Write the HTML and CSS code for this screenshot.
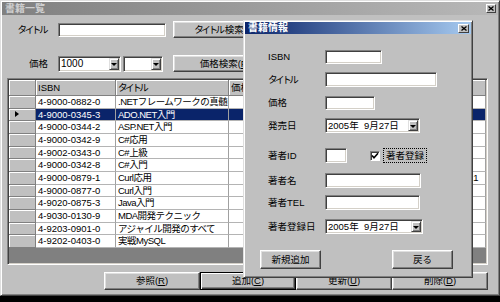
FILE: index.html
```html
<!DOCTYPE html>
<html lang="ja">
<head>
    <meta charset="UTF-8">
    <title>書籍一覧</title>
    <link rel="stylesheet" href="styles.css">
</head>
<body>
    <!-- main list window (inactive) -->
    <div class="window main-window">
        <div class="titlebar inactive">
            <span class="title">書籍一覧</span>
            <span class="close-btn"><svg width="6" height="5" viewBox="0 0 6 5"><path d="M0.5 0.5 L5.5 4.5 M5.5 0.5 L0.5 4.5" stroke="#000" stroke-width="1.3"/></svg></span>
        </div>

        <div class="search-row first">
            <span class="search-label"><span class="kana">タイトル</span></span>
            <span class="field title-input"></span>
            <span class="btn search-btn"><span class="kana">タイトル</span>検索(<u>T</u>)</span>
        </div>
        <div class="search-row">
            <span class="search-label">価格</span>
            <span class="field combo price-from"><span class="combo-text">1000</span><span class="drop-btn"></span></span>
            <span class="field combo price-to"><span class="combo-text"></span><span class="drop-btn"></span></span>
            <span class="btn search-btn">価格検索(<u>P</u>)</span>
        </div>

        <div class="grid">
            <div class="grid-row head">
                <div class="rh"></div>
                <div class="hc">ISBN</div>
                <div class="hc"><span class="kana">タイトル</span></div>
                <div class="hc">価格</div>
                <div class="hc">著者名</div>
                <div class="hc">発売日</div>
            </div>
            <div class="grid-row"><div class="rh"></div><div class="c">4-9000-0882-0</div><div class="c t">.NETフレームワークの真髄</div><div class="c"></div><div class="c"></div><div class="c"></div></div>
            <div class="grid-row selected"><div class="rh"><span class="pointer"></span></div><div class="c">4-9000-0345-3</div><div class="c t">ADO.NET入門</div><div class="c"></div><div class="c"></div><div class="c"></div></div>
            <div class="grid-row"><div class="rh"></div><div class="c">4-9000-0344-2</div><div class="c t">ASP.NET入門</div><div class="c"></div><div class="c"></div><div class="c"></div></div>
            <div class="grid-row"><div class="rh"></div><div class="c">4-9000-0342-9</div><div class="c t">C#応用</div><div class="c"></div><div class="c"></div><div class="c"></div></div>
            <div class="grid-row"><div class="rh"></div><div class="c">4-9002-0343-0</div><div class="c t">C#上級</div><div class="c"></div><div class="c"></div><div class="c"></div></div>
            <div class="grid-row"><div class="rh"></div><div class="c">4-9000-0342-8</div><div class="c t">C#入門</div><div class="c"></div><div class="c"></div><div class="c"></div></div>
            <div class="grid-row"><div class="rh"></div><div class="c">4-9000-0879-1</div><div class="c t">Curl応用</div><div class="c"></div><div class="c"></div><div class="c">2005/09/21</div></div>
            <div class="grid-row"><div class="rh"></div><div class="c">4-9000-0877-0</div><div class="c t">Curl入門</div><div class="c"></div><div class="c"></div><div class="c"></div></div>
            <div class="grid-row"><div class="rh"></div><div class="c">4-9020-0875-3</div><div class="c t">Java入門</div><div class="c"></div><div class="c"></div><div class="c"></div></div>
            <div class="grid-row"><div class="rh"></div><div class="c">4-9030-0130-9</div><div class="c t">MDA開発テクニック</div><div class="c"></div><div class="c"></div><div class="c"></div></div>
            <div class="grid-row"><div class="rh"></div><div class="c">4-9203-0901-0</div><div class="c t">アジャイル開発のすべて</div><div class="c"></div><div class="c"></div><div class="c"></div></div>
            <div class="grid-row"><div class="rh"></div><div class="c">4-9202-0403-0</div><div class="c t">実戦MySQL</div><div class="c"></div><div class="c"></div><div class="c"></div></div>
            <div class="grid-empty"></div>
        </div>

        <div class="actions">
            <span class="btn action-btn">参照(<u>R</u>)</span>
            <span class="btn action-btn default">追加(<u>C</u>)</span>
            <span class="btn action-btn">更新(<u>U</u>)</span>
            <span class="btn action-btn">削除(<u>D</u>)</span>
        </div>
    </div>

    <!-- detail dialog (active) -->
    <div class="window dialog">
        <div class="titlebar active">
            <span class="title">書籍情報</span>
            <span class="close-btn"><svg width="6" height="5" viewBox="0 0 6 5"><path d="M0.5 0.5 L5.5 4.5 M5.5 0.5 L0.5 4.5" stroke="#000" stroke-width="1.3"/></svg></span>
        </div>

        <div class="form">
            <div class="form-row">
                <span class="form-label">ISBN</span>
                <span class="field isbn-input"></span>
            </div>
            <div class="form-row">
                <span class="form-label"><span class="kana">タイトル</span></span>
                <span class="field dlg-title-input"></span>
            </div>
            <div class="form-row">
                <span class="form-label">価格</span>
                <span class="field price-input"></span>
            </div>
            <div class="form-row">
                <span class="form-label">発売日</span>
                <span class="field date-picker release-date"><span class="date-text">2005年  9月27日</span><span class="drop-btn"></span></span>
            </div>
            <div class="form-row gap-lg">
                <span class="form-label">著者ID</span>
                <span class="field author-id-input"></span>
                <span class="checkbox"><svg width="8" height="8" viewBox="0 0 8 8"><path d="M1 3.5 L3 5.8 L7 1.2" fill="none" stroke="#000" stroke-width="1.6"/></svg></span>
                <span class="check-label">著者登録</span>
            </div>
            <div class="form-row gap-md">
                <span class="form-label">著者名</span>
                <span class="field author-input"></span>
            </div>
            <div class="form-row gap-sm">
                <span class="form-label">著者TEL</span>
                <span class="field tel-input"></span>
            </div>
            <div class="form-row gap-9">
                <span class="form-label">著者登録日</span>
                <span class="field date-picker register-date"><span class="date-text">2005年  9月27日</span><span class="drop-btn"></span></span>
            </div>
        </div>

        <div class="dialog-buttons">
            <span class="btn dlg-btn">新規追加</span>
            <span class="btn dlg-btn">戻る</span>
        </div>
    </div>
</body>
</html>
```

FILE: styles.css
```css
* {
    box-sizing: border-box;
}

html, body {
    margin: 0;
    height: 100%;
    background-color: #000;
    overflow: hidden;
}

body {
    position: relative;
    font-family: "Liberation Sans", "Noto Sans CJK JP", sans-serif;
    font-size: 9.5px;
    line-height: 1;
    color: #000;
}

u {
    text-decoration: underline;
}

/* katakana is narrow in the original UI font */
.kana {
    letter-spacing: -2.4px;
    margin-right: 2px;
}

/* classic 3D window frame */
.window {
    background-color: #c0c0c0;
    border: 1px solid;
    border-color: #dfdfdf #404040 #404040 #dfdfdf;
    box-shadow: inset 1px 1px 0 #fff, inset -1px -1px 0 #808080;
    padding: 1px;
}

.main-window {
    width: 500px;
    height: 296px;
    display: flex;
    flex-direction: column;
}

.titlebar {
    height: 13px;
    display: flex;
    align-items: center;
    justify-content: space-between;
    padding: 0 2px 0 3px;
    font-weight: bold;
    font-size: 10px;
}

.titlebar.inactive {
    background: linear-gradient(to right, #808080, #b8b8b8);
    color: #cfcfcf;
}

.titlebar.active {
    height: 12px;
    background: linear-gradient(to right, #0a246a, #a6caf0);
    color: #fff;
}

.close-btn {
    width: 10px;
    height: 9px;
    background-color: #c0c0c0;
    border: 1px solid;
    border-color: #fff #404040 #404040 #fff;
    display: flex;
    align-items: center;
    justify-content: center;
}

.dialog .close-btn {
    width: 11px;
}

/* sunken edit box */
.field {
    display: inline-flex;
    align-items: center;
    background-color: #fff;
    border: 1px solid;
    border-color: #808080 #fff #fff #808080;
    box-shadow: inset 1px 1px 0 #404040, inset -1px -1px 0 #d4d0c8;
    padding: 1px;
}

/* raised push button */
.btn {
    display: inline-flex;
    align-items: center;
    justify-content: center;
    background-color: #c0c0c0;
    border: 1px solid;
    border-color: #fff #404040 #404040 #fff;
    box-shadow: inset -1px -1px 0 #808080, inset 1px 1px 0 #dfdfdf;
    white-space: nowrap;
}

.drop-btn {
    width: 10px;
    height: 12px;
    flex-shrink: 0;
    background-color: #c0c0c0;
    border: 1px solid;
    border-color: #dfdfdf #404040 #404040 #dfdfdf;
    box-shadow: inset 1px 1px 0 #fff, inset -1px -1px 0 #808080;
    display: flex;
    align-items: center;
    justify-content: center;
}

.drop-btn::after {
    content: "";
    border-left: 3px solid transparent;
    border-right: 3px solid transparent;
    border-top: 3px solid #000;
    margin-top: 1px;
}

/* search area */
.search-row {
    display: flex;
    align-items: center;
    height: 17px;
    margin-top: 17px;
}

.search-row.first {
    margin-top: 6px;
}

.search-label {
    width: 46px;
    text-align: right;
    margin-right: 10px;
}

.title-input {
    width: 108px;
    height: 14px;
}

.combo {
    height: 16px;
    justify-content: space-between;
    padding-left: 2px;
}

.price-from {
    width: 63px;
    font-size: 10px;
}

.price-to {
    width: 40px;
    margin-left: 2px;
}

.search-btn {
    width: 104px;
    height: 17px;
    margin-left: 10px;
}

.title-input + .search-btn {
    margin-left: 7px;
}

/* data grid */
.grid {
    margin: 6px 10px 0 5px;
    height: 187px;
    border: 1px solid;
    border-color: #808080 #fff #fff #808080;
    box-shadow: inset 1px 1px 0 #404040, inset -1px -1px 0 #d4d0c8;
    padding: 1px;
    display: flex;
    flex-direction: column;
    overflow: hidden;
}

.grid-row {
    display: grid;
    grid-template-columns: 27px 80px 113px 70px 130px 1fr;
    height: 12.67px;
    background-color: #fff;
}

.grid-row.head {
    height: 16px;
    background-color: #c0c0c0;
}

.rh {
    background-color: #c0c0c0;
    border-right: 1px solid #808080;
    border-bottom: 1px solid #808080;
    box-shadow: inset 1px 1px 0 #fff;
    display: flex;
    align-items: center;
    padding-left: 6px;
}

.hc {
    border-right: 1px solid #808080;
    border-bottom: 1px solid #808080;
    box-shadow: inset 1px 1px 0 #fff;
    display: flex;
    align-items: center;
    padding-left: 2px;
}

.c {
    border-right: 1px solid #a0a0a0;
    border-bottom: 1px solid #b4b4b4;
    display: flex;
    align-items: center;
    padding-left: 2px;
    white-space: nowrap;
    overflow: hidden;
}

.c.t {
    letter-spacing: -0.5px;
}

.grid-row.selected .c {
    background-color: #0a246a;
    color: #fff;
}

.pointer {
    border-top: 3px solid transparent;
    border-bottom: 3px solid transparent;
    border-left: 4px solid #000;
}

.grid-empty {
    flex: 1;
    background-color: #808080;
}

/* bottom buttons */
.actions {
    display: flex;
    justify-content: flex-end;
    margin-top: 7px;
    padding-right: 10px;
}

.action-btn {
    width: 96px;
    height: 18px;
}

.action-btn.default {
    border-color: #000;
    box-shadow: inset 1px 1px 0 #fff, inset -1px -1px 0 #404040, inset -2px -2px 0 #808080;
}

/* dialog */
.dialog {
    position: absolute;
    left: 243px;
    top: 20px;
    width: 230px;
    height: 258px;
}

.form {
    display: flex;
    flex-direction: column;
    padding: 15px 0 0 23px;
}

.form-row {
    display: flex;
    align-items: center;
    height: 15px;
    margin-top: 8px;
}

.form-row:first-child {
    margin-top: 0;
}

.form-row.gap-lg {
    margin-top: 15px;
}

.form-row.gap-md {
    margin-top: 10px;
}

.form-row.gap-sm {
    margin-top: 7px;
}

.form-row.gap-9 {
    margin-top: 9px;
}

.form-label {
    width: 57px;
}

.isbn-input {
    width: 57px;
    height: 14px;
}

.dlg-title-input {
    width: 112px;
    height: 15px;
}

.price-input {
    width: 50px;
    height: 14px;
}

.date-picker {
    height: 15px;
    justify-content: space-between;
    padding-left: 2px;
}

.date-text {
    white-space: pre;
}

.release-date {
    width: 95px;
}

.register-date {
    width: 98px;
}

.date-picker .drop-btn {
    height: 11px;
}

.author-id-input {
    width: 22px;
    height: 15px;
}

.checkbox {
    width: 10px;
    height: 10px;
    margin-left: 23px;
    background-color: #fff;
    border: 1px solid;
    border-color: #808080 #fff #fff #808080;
    box-shadow: inset 1px 1px 0 #404040;
    display: flex;
    align-items: center;
    justify-content: center;
}

.check-label {
    margin-left: 3px;
    padding: 2px 2px;
    border: 1px dotted #000;
}

.author-input {
    width: 96px;
    height: 15px;
}

.tel-input {
    width: 95px;
    height: 15px;
}

.dialog-buttons {
    display: flex;
    justify-content: space-between;
    margin-top: 16px;
    padding: 0 18px 0 15px;
}

.dlg-btn {
    width: 61px;
    height: 19px;
}
```
